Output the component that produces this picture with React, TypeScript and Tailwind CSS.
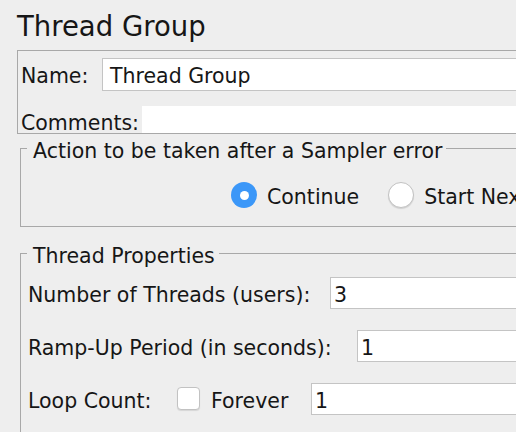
import type { ReactNode } from "react";

const font = "font-['DejaVu_Sans',_'Liberation_Sans',_sans-serif]";

function TextBox({ value, className = "" }: { value: string; className?: string }) {
  return (
    <div
      className={[
        "h-[32px] flex-1 whitespace-nowrap border border-[#c4c4c4] bg-white pl-[3px] pt-[5px] leading-[24px]",
        className,
      ].join(" ")}
    >
      {value}
    </div>
  );
}

function Radio({ checked, label }: { checked?: boolean; label: string }) {
  return (
    <div className="mr-[29px] flex items-start whitespace-nowrap">
      {checked ? (
        <span className="flex h-[26px] w-[26px] shrink-0 items-center justify-center rounded-full bg-[#3b97f8]">
          <span className="h-[9px] w-[9px] rounded-full bg-white" />
        </span>
      ) : (
        <span className="h-[26px] w-[26px] shrink-0 rounded-full border border-[#c2c2c2] bg-white shadow-[0_1px_1px_rgba(0,0,0,0.12)]" />
      )}
      <span className="ml-[10px] mt-[3px] leading-[24px]">{label}</span>
    </div>
  );
}

function Group({ title, children, className = "" }: { title: string; children: ReactNode; className?: string }) {
  return (
    <fieldset className={["ml-[20px] border border-[#a8a8a8] px-0", className].join(" ")}>
      <legend className="ml-[6px] pl-[6px] pr-[4px] pt-[5px] leading-[20px]">{title}</legend>
      {children}
    </fieldset>
  );
}

export default function App() {
  return (
    <div className={`h-[432px] w-[516px] overflow-hidden bg-[#eeeeee] text-[20.5px] text-[#161616] ${font}`}>
      <div className="w-[700px] pt-[10px]">
        <h1 className="pl-[17px] text-[27.5px] leading-[32px]">Thread Group</h1>

        <div className="ml-[17px] mt-[8px] border border-[#a8a8a8] pl-[3px] pt-[7px]">
          <div className="flex items-start">
            <div className="h-[33px] w-[81px] pt-[6px] leading-[24px]">Name:</div>
            <div className="h-[33px] flex-1 border border-[#c4c4c4] bg-white pl-[7px] pt-[5px] leading-[24px]">
              Thread Group
            </div>
          </div>
          <div className="mt-[15px] flex items-start">
            <div className="h-[27px] w-[121px] pt-[5px] leading-[24px]">Comments:</div>
            <div className="h-[27px] flex-1 bg-white" />
          </div>
        </div>

        <Group title="Action to be taken after a Sampler error" className="mt-[2px]">
          <div className="flex pb-[17px] pl-[210px] pt-[21px]">
            <Radio checked label="Continue" />
            <Radio label="Start Next Thread Loop" />
          </div>
        </Group>

        <Group title="Thread Properties" className="mt-[14px]">
          <div className="flex flex-col gap-[21px] pb-[40px] pl-[7px] pt-[11px]">
            <div className="flex items-start">
              <div className="h-[32px] w-[302px] whitespace-nowrap pt-[6px] leading-[24px]">
                Number of Threads (users):
              </div>
              <TextBox value="3" />
            </div>
            <div className="flex items-start">
              <div className="h-[32px] w-[329px] whitespace-nowrap pt-[6px] leading-[24px]">
                Ramp-Up Period (in seconds):
              </div>
              <TextBox value="1" />
            </div>
            <div className="flex items-start">
              <div className="h-[32px] w-[149px] whitespace-nowrap pt-[6px] leading-[24px]">Loop Count:</div>
              <span className="mt-[4px] h-[23px] w-[23px] shrink-0 rounded-[4px] border border-[#c2c2c2] bg-white shadow-[0_1px_1px_rgba(0,0,0,0.1)]" />
              <div className="h-[32px] w-[111px] whitespace-nowrap pl-[11px] pt-[6px] leading-[24px]">Forever</div>
              <TextBox value="1" />
            </div>
          </div>
        </Group>
      </div>
    </div>
  );
}
